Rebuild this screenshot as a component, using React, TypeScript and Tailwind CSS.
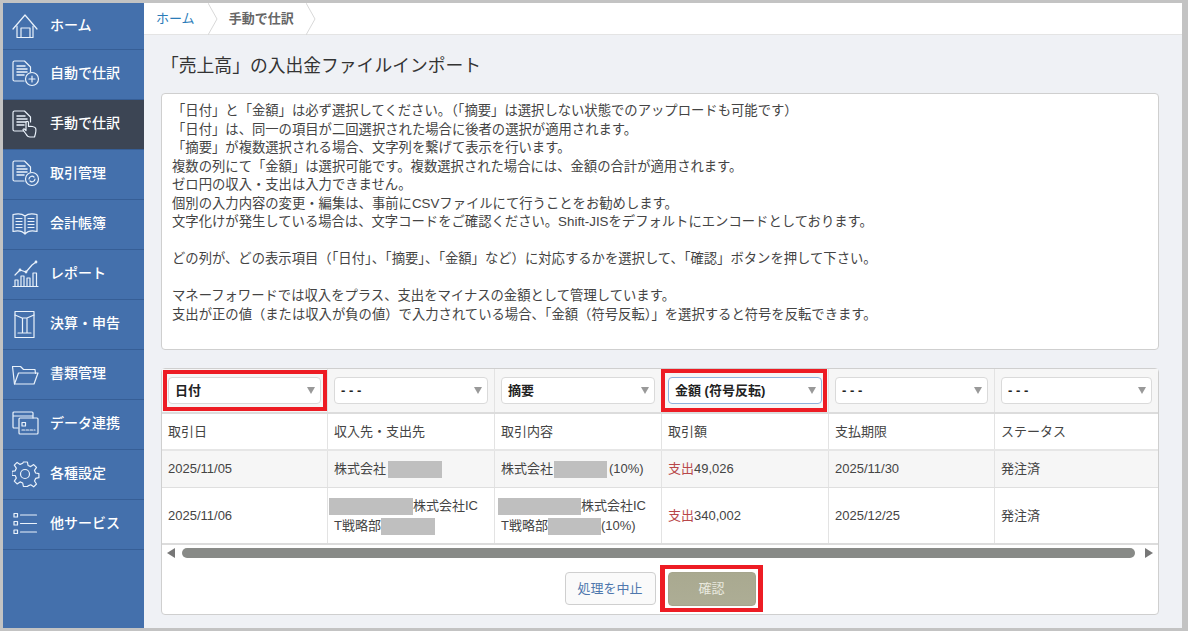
import type { ReactNode } from "react";

const stroke = { fill: "none", stroke: "#eaf2fb", strokeWidth: 1.2, strokeLinecap: "round", strokeLinejoin: "round" } as const;

const Doc = ({ children }: { children?: ReactNode }) => (
  <svg width="28" height="28" viewBox="0 0 28 28" {...stroke}>
    <path d="M12 21H2.5A1.500 1.500 0 0 1 1 19.500V2.500A1.500 1.500 0 0 1 2.500 1h10l6 6v5" />
    <path d="M5 6h8M5 9h10M5 12h10M5 15h7" strokeWidth="1.500" />
    {children}
  </svg>
);

const icons: Record<string, ReactNode> = {
  home: (
    <svg width="28" height="28" viewBox="0 0 28 28" {...stroke}>
      <path d="M1 18 13 4l12 14" />
      <path d="M5 15v11.500h16V15" />
      <path d="M9 26.500V17h9v9.500" />
    </svg>
  ),
  auto: (
    <Doc>
      <circle cx="20" cy="19" r="6.500" />
      <path d="M20 16v6M17 19h6" />
    </Doc>
  ),
  manual: (
    <Doc>
      <path d="M18 27c-2 0-3-1-4-3l-3-4c0-1 1-1.500 2-.500l1 1v-8c0-1.500 2.500-1.500 2.500 0v4c2-.500 6 0 7 1.500 1 2 0 6-1 9z" fill="#3c4554" />
    </Doc>
  ),
  trade: (
    <Doc>
      <circle cx="20" cy="19" r="6.500" />
      <path d="M17 19a3 3 0 0 1 5-2M23 19a3 3 0 0 1-5 2" />
    </Doc>
  ),
  book: (
    <svg width="28" height="28" viewBox="0 0 28 28" {...stroke}>
      <path d="M13 6C10 3.500 5 3.500 1 4.500v17c4-1 9-1 12 2.500 3-3.500 8-3.500 12-2.500v-17C21 3.500 16 3.500 13 6zM13 6v18" />
      <path d="M4 8.500h6M4 11.500h6M4 14.500h6M4 17.500h6M16 8.500h6M16 11.500h6M16 14.500h6M16 17.500h6" />
    </svg>
  ),
  report: (
    <svg width="28" height="28" viewBox="0 0 28 28" {...stroke}>
      <path d="M1 26.500h25" />
      <path d="M3 26v-6h3v6M9 26v-10h3v10M15 26v-8h3v8M21 26V13h3.500v13" />
      <path d="M3 15l5-5 6 2 6-7 4-3" />
      <circle cx="8" cy="10" r="0.800" />
      <circle cx="14" cy="12" r="0.800" />
      <circle cx="24" cy="2" r="0.800" />
    </svg>
  ),
  tax: (
    <svg width="28" height="28" viewBox="0 0 28 28" {...stroke}>
      <path d="M3 1.500h19v26H3z" />
      <path d="M3 5l7 3h5l7-3M10.500 8v15M15 8v15M6 23h13" />
    </svg>
  ),
  folder: (
    <svg width="28" height="28" viewBox="0 0 28 28" {...stroke}>
      <path d="M2.500 24 0.500 6.500h8l3 3h11.500l.500 4" />
      <path d="M2.500 24H22l4-11H6.500z" />
    </svg>
  ),
  data: (
    <svg width="28" height="28" viewBox="0 0 28 28" {...stroke}>
      <path d="M6 18H2a1 1 0 0 1-1-1V3a1 1 0 0 1 1-1h18a1 1 0 0 1 1 1v5M1 6h20" />
      <path d="M8 8h17a1 1 0 0 1 1 1v14a1 1 0 0 1-1 1H8a1 1 0 0 1-1-1V9a1 1 0 0 1 1-1z" />
      <path d="M10 12.500h3.500V16H10z" />
      <path d="M10 20h13" strokeDasharray="2.500 1.500" />
    </svg>
  ),
  gear: (
    <svg width="28" height="28" viewBox="0 0 28 28" {...stroke}>
      <circle cx="13" cy="14" r="4.500" />
      <path d="M11 2h4l.7 3.500 2.600 1.100 3-2 2.800 2.800-2 3 1.100 2.600 3.300.7v4l-3.300.7-1.100 2.600 2 3-2.800 2.800-3-2-2.600 1.100L15 26.500h-4l-.7-3.500-2.600-1.100-3 2-2.800-2.800 2-3-1.100-2.600L-.500 15.500v-4l3.300-.7 1.100-2.600-2-3L4.700 2.400l3 2 2.600-1.100z" transform="translate(0.400 0)" />
    </svg>
  ),
  list: (
    <svg width="28" height="28" viewBox="0 0 28 28" {...stroke}>
      <path d="M2 3.500h3.500V7H2zM2 11.500h3.500V15H2zM2 20h3.500v3.500H2z" />
      <path d="M8.500 5h16M8.500 13.500h16M8.500 22h16" />
    </svg>
  ),
};

const navItems = [
  { label: "ホーム", icon: "home" },
  { label: "自動で仕訳", icon: "auto" },
  { label: "手動で仕訳", icon: "manual", active: true },
  { label: "取引管理", icon: "trade" },
  { label: "会計帳簿", icon: "book" },
  { label: "レポート", icon: "report" },
  { label: "決算・申告", icon: "tax" },
  { label: "書類管理", icon: "folder" },
  { label: "データ連携", icon: "data" },
  { label: "各種設定", icon: "gear" },
  { label: "他サービス", icon: "list" },
];

const notes = [
  "「日付」と「金額」は必ず選択してください。（「摘要」は選択しない状態でのアップロードも可能です）",
  "「日付」は、同一の項目が二回選択された場合に後者の選択が適用されます。",
  "「摘要」が複数選択される場合、文字列を繋げて表示を行います。",
  "複数の列にて「金額」は選択可能です。複数選択された場合には、金額の合計が適用されます。",
  "ゼロ円の収入・支出は入力できません。",
  "個別の入力内容の変更・編集は、事前にCSVファイルにて行うことをお勧めします。",
  "文字化けが発生している場合は、文字コードをご確認ください。Shift-JISをデフォルトにエンコードとしております。",
  "",
  "どの列が、どの表示項目（「日付」、「摘要」、「金額」など）に対応するかを選択して、「確認」ボタンを押して下さい。",
  "",
  "マネーフォワードでは収入をプラス、支出をマイナスの金額として管理しています。",
  "支出が正の値（または収入が負の値）で入力されている場合、「金額（符号反転）」を選択すると符号を反転できます。",
];

const Mask = ({ w }: { w: string }) => <span className={`inline-block h-[17px] bg-[#bfbfbf] align-middle ${w}`} />;

const Chevron = () => (
  <svg width="10" height="32" viewBox="0 0 10 32" className="shrink-0">
    <path d="M0 0l9 16-9 16" fill="none" stroke="#d8d8d8" />
  </svg>
);

const Select = ({ label, blue }: { label: string; blue?: boolean }) => (
  <div className={`flex h-[27px] items-center justify-between rounded-[4px] border bg-white pl-[6px] pr-[5px] text-[13px] font-bold text-[#222] ${blue ? "border-[#8fb3dd]" : "border-[#dadada]"}`}>
    <span>{label}</span>
    <span className="h-0 w-0 border-x-[4.500px] border-t-[7px] border-x-transparent border-t-[#999]" />
  </div>
);

const selects = [
  { label: "日付", red: "left-[1px] right-0 top-[1px] bottom-[1px]" },
  { label: "- - -" },
  { label: "摘要" },
  { label: "金額 (符号反転)", blue: true, red: "-left-[1px] right-[1px] top-0 bottom-0" },
  { label: "- - -" },
  { label: "- - -" },
];

const cell = "border-r border-[#e3e3e3] px-[6px] last:border-r-0";

export default function App() {
  return (
    <div className="box-border flex h-[631px] w-[1188px] overflow-hidden border-y-[3px] border-l-[3px] border-r-[6px] border-[#c3c3c3] font-['Liberation_Sans','Noto_Sans_CJK_JP',sans-serif] text-[13px] text-[#444]">
      <aside className="w-[141px] shrink-0 bg-[#4470ac] text-[14px] font-medium text-white">
        {navItems.map((item, i) => (
          <div key={item.label} className={`flex items-center gap-[10px] border-b border-[#365e96] pb-[2px] pl-[9px] ${i === 0 ? "h-[47px]" : "h-[50px]"} ${item.active ? "bg-[#3c4554]" : ""}`}>
            <span className="flex h-7 w-7 items-center justify-center">{icons[item.icon]}</span>
            <span>{item.label}</span>
          </div>
        ))}
      </aside>
      <main className="flex flex-1 flex-col bg-[#eff1f5]">
        <nav className="flex h-[32px] items-center border-b border-[#e4e4e4] bg-white">
          <span className="pl-[12px] pr-[13px] text-[#2b7cb8]">ホーム</span>
          <Chevron />
          <span className="pl-[11px] pr-[12px] font-bold text-[#666]">手動で仕訳</span>
          <Chevron />
        </nav>
        <div className="flex-1 pl-[17px] pr-[23px]">
          <h1 className="mb-[17px] mt-[20px] h-[21px] text-[17.800px] font-normal leading-[22px] text-[#333]">「売上高」の入出金ファイルインポート</h1>
          <div className="h-[257px] rounded-[4px] border border-[#cfcfcf] bg-white px-[10px] pt-[8px] text-[13.330px] leading-[18.500px]">
            {notes.map((n, i) => (
              <div key={i} className="h-[18.500px] whitespace-nowrap">{n}</div>
            ))}
          </div>
          <div className="mt-[18px] rounded-[4px] border border-[#cfcfcf] bg-white">
            <div className="grid grid-cols-[166px_167px_167px_167px_166px_163px]">
              <div className="col-span-6 grid h-[45px] grid-cols-subgrid border-b-2 border-[#dcdcdc] bg-[#f6f6f6]">
                {selects.map((s, i) => (
                  <div key={i} className="relative border-r border-[#e3e3e3] px-[6px] pt-[8px] last:border-r-0">
                    <Select label={s.label} blue={s.blue} />
                    {s.red && <span className={`absolute border-4 border-[#ed1c24] ${s.red}`} />}
                  </div>
                ))}
              </div>
              <div className="col-span-6 grid h-[37px] grid-cols-subgrid border-b-2 border-[#e6e6e6] leading-[35px]">
                {["取引日", "収入先・支出先", "取引内容", "取引額", "支払期限", "ステータス"].map((h) => (
                  <div key={h} className={cell}>{h}</div>
                ))}
              </div>
              <div className="col-span-6 grid h-[37px] grid-cols-subgrid border-b border-[#dfdfdf] bg-[#f6f6f6] leading-[36px]">
                <div className={cell}>2025/11/05</div>
                <div className={cell}>株式会社<span className="ml-[2px]"><Mask w="w-[54px]" /></span></div>
                <div className={cell}>株式会社<span className="ml-[1px] mr-[2px]"><Mask w="w-[53px]" /></span>(10%)</div>
                <div className={cell}><span className="text-[#b8474a]">支出</span>49,026</div>
                <div className={cell}>2025/11/30</div>
                <div className={cell}>発注済</div>
              </div>
              <div className="col-span-6 grid h-[57px] grid-cols-subgrid border-b-2 border-[#dcdcdc] leading-[55px]">
                <div className={cell}>2025/11/06</div>
                <div className={`${cell} pt-[8px] leading-[20px]`}>
                  <div className="-ml-[5px] whitespace-nowrap"><Mask w="w-[84px]" />株式会社IC</div>
                  <div>T戦略部<Mask w="w-[54px]" /></div>
                </div>
                <div className={`${cell} pt-[8px] leading-[20px]`}>
                  <div className="-ml-[3px] whitespace-nowrap"><Mask w="w-[83px]" />株式会社IC</div>
                  <div className="whitespace-nowrap">T戦略部<Mask w="w-[53px]" />(10%)</div>
                </div>
                <div className={cell}><span className="text-[#b8474a]">支出</span>340,002</div>
                <div className={cell}>2025/12/25</div>
                <div className={cell}>発注済</div>
              </div>
            </div>
            <div className="flex h-[19px] items-start px-[5px] pt-[3px]">
              <span className="h-0 w-0 border-y-[5px] border-r-[8px] border-y-transparent border-r-[#777]" />
              <span className="ml-[7px] mr-[10px] h-[10px] flex-1 rounded-full bg-[#888a87]" />
              <span className="h-0 w-0 border-y-[5px] border-l-[8px] border-y-transparent border-l-[#777]" />
            </div>
            <div className="flex h-[50px] items-start justify-center gap-[12px] pt-[8px]">
              <button className="h-[33px] w-[91px] rounded-[4px] border border-[#cfcfcf] bg-[#fafafa] text-[13px] text-[#4f78ad]">処理を中止</button>
              <div className="relative">
                <button className="block h-[34px] w-[88px] rounded-[4px] border border-[#a5a58d] bg-gradient-to-b from-[#a9a990] to-[#adad95] text-[13px] text-[#e9e9df]">確認</button>
                <span className="absolute -bottom-[6px] -left-[8px] -right-[7px] -top-[7px] border-x-[5px] border-y-4 border-[#ed1c24]" />
              </div>
            </div>
          </div>
        </div>
      </main>
    </div>
  );
}
